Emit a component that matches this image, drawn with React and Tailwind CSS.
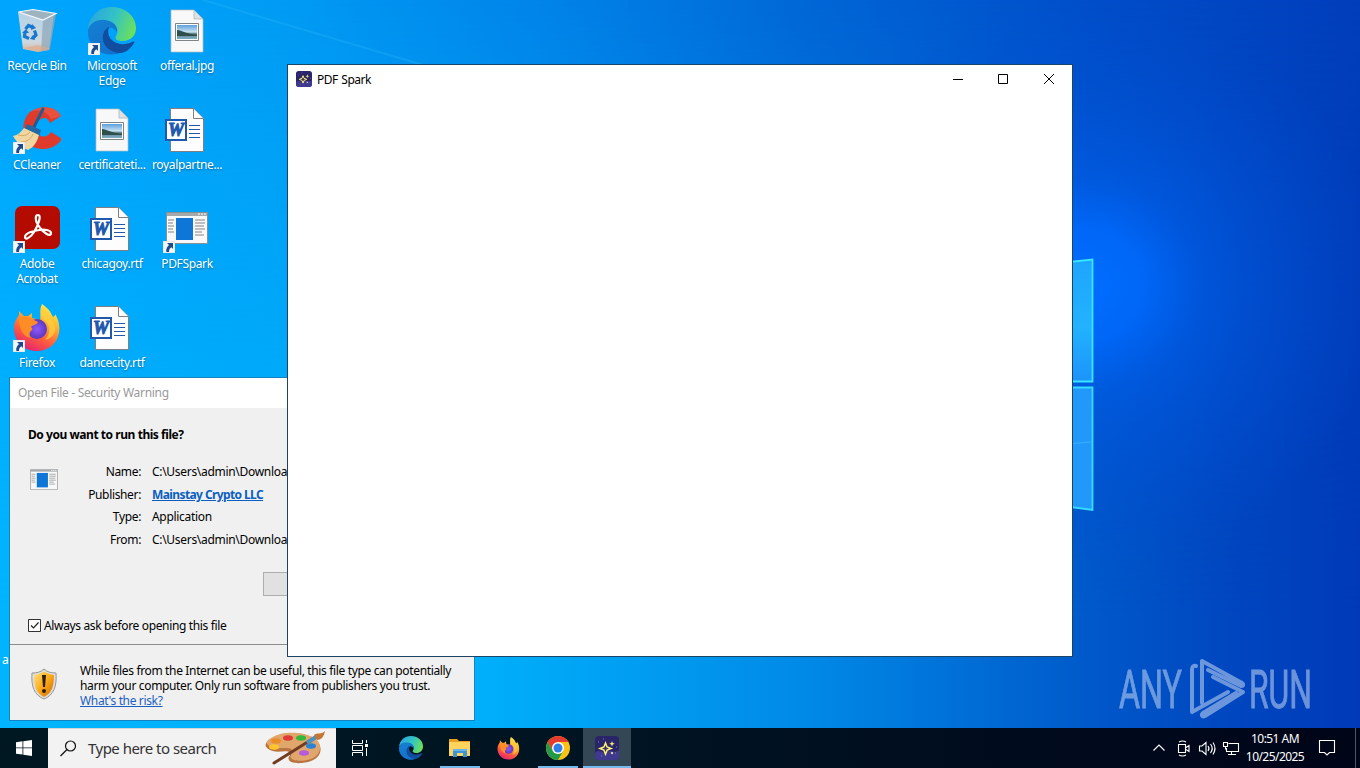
import React from "react";

function ShortcutArrow() {
  return (
    <svg viewBox="0 0 12 12" className="absolute bottom-0 left-0 w-3 h-3">
      <rect width="12" height="12" fill="#f4f6f8" stroke="#c8ccd2" strokeWidth="0.6" />
      <path d="M4 2h6v6L8.300 6.300C6.500 7.600 6 8.900 6 11H3.300C2.800 8 4 5.700 6 4Z" fill="#1d4a8c" />
    </svg>
  );
}

function RecycleBin() {
  return (
    <svg viewBox="0 0 48 48" className="w-12 h-12">
      <defs>
        <linearGradient id="bin" x1="0" y1="0" x2="0" y2="1">
          <stop offset="0" stopColor="#b4d2e6" />
          <stop offset="0.75" stopColor="#cdd8e0" />
          <stop offset="1" stopColor="#dfb59a" />
        </linearGradient>
      </defs>
      <path d="M5 5 41 7 36 43 25 45 10 42Z" fill="url(#bin)" />
      <path d="M30 13 43 7 37 42 28 45Z" fill="#8fa8b9" opacity="0.75" />
      <path d="M5.500 5 20 2.500 43 6.500 30 13Z" fill="#9db3c0" stroke="#f2f8fc" strokeWidth="1.200" />
      <path d="M10 41 28 44 37 41.500 25 38Z" fill="#e0a888" opacity="0.6" />
      <g fill="none" stroke="#1678cf" strokeWidth="3.200">
        <path d="M12.500 22 15.500 18.500 20 20.500" />
        <path d="M21.500 23.500 23 28 19.500 31.500" />
        <path d="M16 31.500 11.500 29.500 12 25" />
      </g>
      <path d="m19 17 4 4-5 2ZM22 33l-5-1 3-4ZM9 26l4-4 3 4Z" fill="#1678cf" />
    </svg>
  );
}

function EdgeIcon({ className }) {
  return (
    <svg viewBox="0 0 48 48" className={className}>
      <defs>
        <linearGradient id="edgeTop" x1="0" y1="0.300" x2="1" y2="0.600">
          <stop offset="0" stopColor="#2aa5e0" />
          <stop offset="0.5" stopColor="#33c3c6" />
          <stop offset="1" stopColor="#6ce05a" />
        </linearGradient>
        <linearGradient id="edgeMid" x1="0" y1="0" x2="0.600" y2="1">
          <stop offset="0" stopColor="#1380d2" />
          <stop offset="1" stopColor="#1472cc" />
        </linearGradient>
      </defs>
      <path d="M0 22C1 9 11 0 24 0s24 9 24 21c0 8-6 13-13 13-6 0-9-2-7-5 4-6 0-14-10-15C9 13 3 16 0 22Z" fill="url(#edgeTop)" />
      <path d="M0 23c2-7 9-11 17-10 8 1 13 6 12 12-2-3-5-5-8-4-6 7-1 21 14 23-5 4-11 4-17 3C6 44-1 34 0 23Z" fill="url(#edgeMid)" />
      <path d="M19 21c-8 7-5 24 14 25 6-1 10-5 13-10 1-1 0-2-2-1-6 3-14 3-19-1-4-3-6-8-4-14Z" fill="#114c9e" />
    </svg>
  );
}

function PictureFile() {
  return (
    <svg viewBox="0 0 48 48" className="w-12 h-12">
      <defs>
        <linearGradient id="photo" x1="0" y1="0" x2="0" y2="1">
          <stop offset="0" stopColor="#5e9fde" />
          <stop offset="0.500" stopColor="#c8e3f2" />
          <stop offset="0.620" stopColor="#5d8088" />
          <stop offset="1" stopColor="#7fb0c8" />
        </linearGradient>
      </defs>
      <path d="M8 3h23l9 9v33H8Z" fill="#f8f8f8" stroke="#b7bcc0" strokeWidth="0.700" />
      <path d="M31 3v9h9Z" fill="#dce2e5" stroke="#aab0b3" strokeWidth="0.700" />
      <path d="M12.500 16.500h23v17h-23Z" fill="#fff" stroke="#7d8387" />
      <path d="M14 18h20v14H14Z" fill="url(#photo)" />
      <path d="M14 23c5 0 9 4.500 20 4.500v1.500H14Z" fill="#2f4f4b" />
    </svg>
  );
}

function WordFile() {
  return (
    <svg viewBox="0 0 48 48" className="w-12 h-12">
      <path d="M7.500 2.500h23l10 10v33h-33Z" fill="#fdfdfd" stroke="#817d80" />
      <path d="M30.500 2.500v10h10" fill="#fff" stroke="#817d80" />
      <path d="M26 19.500h11M26 23.500h11M26 27.500h11M26 31.500h11" stroke="#2458a8" strokeWidth="1.200" />
      <rect x="3" y="14" width="20" height="20" fill="#fff" stroke="#1e59ae" strokeWidth="2" />
      <text x="13" y="30" textAnchor="middle" fontFamily="Liberation Serif, serif" fontSize="18" fontWeight="700" fontStyle="italic" letterSpacing="0" fill="#1e59ae" stroke="#1e59ae" strokeWidth="1">
        W
      </text>
    </svg>
  );
}

function CCleanerIcon() {
  return (
    <svg viewBox="0 0 48 48" className="w-12 h-12">
      <path d="M48 10C42-1 27-1 17 6 9 13 8 29 15 37c8 9 26 8 34-4l-11-7c-4 6-11 6-14 0-3-5-1-11 4-13 4-2 7-1 9 4Z" fill="#df3b2d" />
      <path d="M48 10C42-1 27-1 17 6c8-3 16-2 21 7Z" fill="#ef6048" opacity="0.6" />
      <path d="m30 3-9 18" stroke="#205c93" strokeWidth="3" strokeLinecap="round" />
      <path d="m14 18 14 6-2 7-15-7Z" fill="#2469a6" />
      <path d="m11 22 15 7c-2 7-5 12-11 15-6-2-11-7-15-14 5-1 8-4 11-8Z" fill="#f0d6a0" />
      <path d="M5 29c4 1 9 1 12-3M8 36c4 0 10-2 12-8" stroke="#d2aa69" fill="none" />
    </svg>
  );
}

function AcrobatIcon() {
  return (
    <svg viewBox="0 0 48 48" className="w-12 h-12">
      <rect x="2" y="1" width="45" height="43" rx="7" fill="#b30b00" />
      <path d="M12 32c0-4 8-6 14-7 5-1 12 0 12 3 0 5-9-1-13-8-3-5-3-10 0-10 4 0 0 11-4 17-3 5-9 9-9 5Z" fill="none" stroke="#fff" strokeWidth="2.200" />
    </svg>
  );
}

function FirefoxIcon({ className }) {
  return (
    <svg viewBox="0 0 48 48" className={className}>
      <defs>
        <linearGradient id="fox" x1="0.800" y1="0" x2="0.300" y2="1">
          <stop offset="0" stopColor="#fff14f" />
          <stop offset="0.350" stopColor="#ffb32f" />
          <stop offset="0.650" stopColor="#ff633a" />
          <stop offset="1" stopColor="#e52072" />
        </linearGradient>
        <radialGradient id="globe">
          <stop offset="0" stopColor="#9059ff" />
          <stop offset="1" stopColor="#5b38bd" />
        </radialGradient>
      </defs>
      <path d="M29 0c9 6 9 10 11 13 2-1 2-2 2-3 4 6 5 13 4 19-2 11-11 18-22 18C10 47 1 37 1 24c0-6 3-10 5-13V7l5 5h4l4-3v5l8 2c1-6-1-10 2-16Z" fill="url(#fox)" />
      <circle cx="24" cy="25" r="10" fill="url(#globe)" />
      <path d="M6 14c4-2 10-2 13 1l6 3c-1 3-6 3-7 5 1 1 2 2 1 3-3 2-3 5-1 8-7-1-12-8-12-20Z" fill="#ff8d26" />
      <path d="M30 15c8 4 8 15 2 21 9-2 13-10 8-18-3-5-8-8-11-13-2 5 0 8 1 10Z" fill="#ffcf3f" opacity="0.75" />
    </svg>
  );
}

// Generic Windows program icon
function AppIcon({ className }) {
  return (
    <svg viewBox="0 0 42 32" className={className}>
      <path d="M0.500 0.500h41v31h-41Z" fill="#f8f8f8" stroke="#8c8f91" />
      <path d="M1 1h40v3H1Z" fill="#a5a9ab" />
      <path d="M32 1.500h2v1h-2ZM35 1.500h2v1h-2ZM38 1.500h2v1h-2Z" fill="#fff" />
      <path d="M10 6h17v22H10Z" fill="#0d76d6" />
      <path d="M2 8h6M2 11h5M2 14h6M2 17h5M2 20h6M29 8h10M29 11h10M29 14h9M29 17h10M29 20h7M29 23h9" stroke="#858585" strokeWidth="1" />
    </svg>
  );
}

function SparkIcon({ className }) {
  return (
    <svg viewBox="0 0 24 24" className={className}>
      <rect width="24" height="24" rx="4" fill="#292568" />
      <path d="M0 17c5-5 6 1 10-2s7 4 14-1v6a4 4 0 0 1-4 4H4a4 4 0 0 1-4-4Z" fill="#4943a0" opacity="0.7" />
      <path d="M3 6h1M20 17h1M6 20h1M8 3h1M21 11h1" stroke="#807ccb" />
      <path d="m10.500 7 1.600 4 4 1.500-4 1.600-1.600 4.100-1.600-4.100-4-1.600 4-1.500Z" fill="#3b3660" stroke="#fff078" strokeWidth="1.500" />
      <path d="m17 5 .8 2 2 .8-2 .8-.8 2-.8-2-2-.8 2-.8Z" fill="#f5e77c" />
      <circle cx="17" cy="17" r="1.200" fill="#d8cf8a" />
    </svg>
  );
}

function ExplorerIcon() {
  return (
    <svg viewBox="0 0 24 24" className="w-6 h-6">
      <path d="M1 3h8l2 2h11v4H1Z" fill="#e8a021" />
      <path d="M1 6h21v14H1Z" fill="#ffd35c" />
      <path d="M5 13h14v8h-4v-4H9v4H5Z" fill="#3b95d8" />
      <path d="M5 13h14v2H5Z" fill="#67b4e9" />
    </svg>
  );
}

function ChromeIcon() {
  return (
    <svg viewBox="0 0 24 24" className="w-6 h-6">
      <circle cx="12" cy="12" r="12" fill="#fbc116" />
      <path d="M1.610 6A12 12 0 0 1 22.390 6H12L6.800 15Z" fill="#e33b2e" />
      <path d="M1.610 6A12 12 0 0 0 12 24L17.200 15 12 18 6.800 15Z" fill="#229a48" />
      <circle cx="12" cy="12" r="6" fill="#fff" />
      <circle cx="12" cy="12" r="4.500" fill="#307ee8" />
    </svg>
  );
}

function ShieldIcon() {
  return (
    <svg viewBox="0 0 28 32" className="w-7 h-8">
      <defs>
        <linearGradient id="shield" x1="0" y1="0" x2="1" y2="1">
          <stop offset="0" stopColor="#ffe486" />
          <stop offset="0.450" stopColor="#ffb01c" />
          <stop offset="1" stopColor="#ce6900" />
        </linearGradient>
      </defs>
      <path d="M14 1c3 3 7 4 12 4 1 13-2 22-12 26C4 27 1 18 2 5c5 0 9-1 12-4Z" fill="#dedede" stroke="#969696" />
      <path d="M14 3.500c3 2 6 3 10 3.500 0 11-2 18-10 22C6 25 4 18 4 7c4-.5 7-1.500 10-3.500Z" fill="url(#shield)" />
      <path d="M12 7h4l-1 12h-2Z" fill="#2b1c0b" />
      <circle cx="14" cy="23" r="2" fill="#2b1c0b" />
    </svg>
  );
}

function PaletteIcon() {
  return (
    <svg viewBox="0 0 64 36" className="w-16 h-9">
      <path d="M9 7c9-7 32-7 43 2 8 7 5 18-5 21-8 3-20 3-22-1-2-3 2-4 1-7-3-4-13 1-20-3C-2 15 2 10 9 7Z" fill="#b9743f" />
      <path d="M9 6c9-6 32-6 43 2 7 6 5 16-5 20-8 3-18 2-20-1-2-3 3-4 1-8-3-4-15 0-21-3C-1 12 3 9 9 6Z" fill="#e0a66c" />
      <ellipse cx="12" cy="10" rx="5" ry="2.800" fill="#ed8b25" />
      <ellipse cx="24" cy="7" rx="5" ry="2.800" fill="#df3a36" />
      <ellipse cx="37" cy="7" rx="5" ry="2.800" fill="#35b63d" />
      <ellipse cx="10" cy="16" rx="5" ry="2.800" fill="#ffc52d" />
      <ellipse cx="47" cy="15" rx="5" ry="2.800" fill="#2783d5" />
      <ellipse cx="40" cy="22" rx="5" ry="2.800" fill="#b65be0" />
      <path d="m10 32 40-25" stroke="#713c22" strokeWidth="3" strokeLinecap="round" />
      <path d="m43 12 9-6" stroke="#4f91bd" strokeWidth="4" />
      <path d="M50 4c3-3 7 0 11-4-1 6-4 9-8 9Z" fill="#c47735" />
    </svg>
  );
}

const desktopIcons = [
  { name: "Recycle Bin", icon: <RecycleBin /> },
  { name: "Microsoft Edge", icon: <EdgeIcon className="w-12 h-12" />, shortcut: true },
  { name: "offeral.jpg", icon: <PictureFile /> },
  { name: "CCleaner", icon: <CCleanerIcon />, shortcut: true },
  { name: "certificateti...", icon: <PictureFile /> },
  { name: "royalpartne...", icon: <WordFile /> },
  { name: "Adobe Acrobat", icon: <AcrobatIcon />, shortcut: true },
  { name: "chicagoy.rtf", icon: <WordFile /> },
  { name: "PDFSpark", icon: <AppIcon className="w-[42px] h-8 mt-[7px]" />, shortcut: true },
  { name: "Firefox", icon: <FirefoxIcon className="w-12 h-12" />, shortcut: true },
  { name: "dancecity.rtf", icon: <WordFile /> },
];

function DesktopIcon({ item }) {
  return (
    <div className="flex flex-col items-center h-[99px] pt-[7px]">
      <div className="relative w-12 h-12 flex justify-center">
        {item.icon}
        {item.shortcut && <ShortcutArrow />}
      </div>
      <p className="w-[72px] mt-[3px] ml-px text-center leading-[15px] text-white [text-shadow:0_1px_2px_rgb(0_0_0/0.4)]">
        {item.name}
      </p>
    </div>
  );
}

function Wallpaper() {
  return (
    <svg viewBox="0 0 1360 768" className="absolute inset-0 w-[1360px] h-[768px]">
      <defs>
        <linearGradient id="sky">
          <stop offset="0" stopColor="#00a6fd" />
          <stop offset="0.200" stopColor="#009cf4" />
          <stop offset="0.400" stopColor="#0084e9" />
          <stop offset="0.600" stopColor="#0066d6" />
          <stop offset="0.800" stopColor="#004eca" />
          <stop offset="1" stopColor="#003ebb" />
        </linearGradient>
        <linearGradient id="floor">
          <stop offset="0" stopColor="#00b4ff" />
          <stop offset="0.350" stopColor="#00b0fc" />
          <stop offset="0.600" stopColor="#0088e6" />
          <stop offset="0.800" stopColor="#0059ca" />
          <stop offset="0.900" stopColor="#0047c0" />
          <stop offset="1" stopColor="#003ab8" />
        </linearGradient>
        <linearGradient id="fade" x1="0" y1="0" x2="0" y2="1">
          <stop offset="0" stopColor="#000" />
          <stop offset="0.800" stopColor="#fff" />
        </linearGradient>
        <mask id="lower">
          <rect width="1360" height="768" fill="url(#fade)" />
        </mask>
        <radialGradient id="glow">
          <stop offset="0" stopColor="#006eff" />
          <stop offset="0.200" stopColor="#0069fc" stopOpacity="0.900" />
          <stop offset="0.400" stopColor="#005eea" stopOpacity="0.550" />
          <stop offset="0.700" stopColor="#0053d8" stopOpacity="0.350" />
          <stop offset="1" stopColor="#004cd0" stopOpacity="0" />
        </radialGradient>
        <linearGradient id="pane" x1="0" y1="0" x2="0" y2="1">
          <stop offset="0" stopColor="#1fa5ff" />
          <stop offset="0.550" stopColor="#22b2ff" />
          <stop offset="1" stopColor="#1c93fa" />
        </linearGradient>
      </defs>
      <rect width="1360" height="768" fill="url(#sky)" />
      <rect width="1360" height="768" fill="url(#floor)" mask="url(#lower)" />
      <path d="m203 0 220 65" stroke="#2bb8ff" strokeWidth="2" opacity="0.300" />
      <ellipse cx="1085" cy="285" rx="300" ry="280" fill="url(#glow)" />
      <path d="M1040 265 1092.500 259.500V381.500H1040Z" fill="url(#pane)" stroke="#38e6ff" strokeWidth="1.800" />
      <path d="M1040 387.500h52.500V510L1040 503Z" fill="#2299fa" stroke="#35dcff" strokeWidth="1.800" />
      <path d="m1040 446 52-4" stroke="#42c2ff" opacity="0.600" />
    </svg>
  );
}

function Watermark() {
  return (
    <svg viewBox="0 0 242 64" className="absolute left-[1118px] top-[657px] w-[242px] h-16 opacity-60">
      <g fontFamily="Roboto, sans-serif" fontSize="53" letterSpacing="0" fill="#b5cbef" stroke="#b5cbef" strokeWidth="0.900">
        <text x="1" y="51" textLength="63" lengthAdjust="spacingAndGlyphs">ANY</text>
        <text x="131" y="51" textLength="63" lengthAdjust="spacingAndGlyphs">RUN</text>
      </g>
      <g fill="none" stroke="#b5cbef" strokeWidth="4" strokeLinejoin="round" strokeLinecap="round">
        <path d="M78 9c-3-1-4 1-4 4v42l36-20" />
        <path d="M84 46V4l40 22c2 1.500 1 3.500-1 3L90 13" />
        <path d="m95 20 30 15-38 24c-3 1.500-4-1-2-3l33-20" />
      </g>
    </svg>
  );
}

function SecurityDialog() {
  const details = [
    ["Name:", "C:\\Users\\admin\\Downloa"],
    ["Publisher:", "Mainstay Crypto LLC"],
    ["Type:", "Application"],
    ["From:", "C:\\Users\\admin\\Downloa"],
  ];
  return (
    <section className="absolute left-[9px] top-[377px] w-[466px] h-[344px] border border-[#1583bd] bg-[#f0f0f0] text-black flex flex-col">
      <div className="h-[30px] shrink-0 bg-white pl-2 leading-[30px] text-[#999] tracking-[-0.31px]">
        Open File - Security Warning
      </div>
      <div className="h-[237px] shrink-0 border-b border-[#8d8d8d] pl-[18px] pt-[19px]">
        <p className="font-bold leading-4 tracking-[-0.45px]">Do you want to run this file?</p>
        <div className="flex mt-[18px]">
          <AppIcon className="w-7 h-[21px] mt-[8px] ml-[2px] shrink-0" />
          <div className="ml-[54px]">
            {details.map(([label, value]) => (
              <div key={label} className="flex h-[22.600px] items-center">
                <span className="w-[29px] flex justify-end whitespace-nowrap">{label}</span>
                {label === "Publisher:" ? (
                  <a className="ml-[11px] font-bold text-[#0b5fc0] underline tracking-[-0.6px]">{value}</a>
                ) : (
                  <span className="ml-[11px] tracking-[-0.3px]">{value}</span>
                )}
              </div>
            ))}
          </div>
        </div>
        <div className="ml-[235px] mt-[20.400px] w-[80px] h-6 border border-[#adadad] bg-[#e1e1e1]" />
        <div className="flex items-center mt-[22px] gap-[3px]">
          <svg viewBox="0 0 13 13" className="w-[13px] h-[13px]">
            <path d="M0.500 0.500h12v12h-12Z" fill="#fff" stroke="#333" />
            <path d="m3 6.500 2.500 2.500L10.500 3.500" fill="none" stroke="#222" strokeWidth="1.200" />
          </svg>
          <span className="leading-4">Always ask before opening this file</span>
        </div>
      </div>
      <div className="flex pl-5 pt-[18px]">
        <div className="pt-[5px]">
          <ShieldIcon />
        </div>
        <div className="ml-[22px] leading-[15px] whitespace-nowrap">
          <p>While files from the Internet can be useful, this file type can potentially</p>
          <p>harm your computer. Only run software from publishers you trust.</p>
          <a className="text-[#1a5fc0] underline">What's the risk?</a>
        </div>
      </div>
    </section>
  );
}

function PdfSparkWindow() {
  return (
    <section className="absolute left-[287px] top-[64px] w-[786px] h-[593px] border border-[#1c4463] bg-white">
      <div className="flex items-center h-[29px] pl-2">
        <SparkIcon className="w-4 h-4 mb-px" />
        <span className="ml-[5px] text-black tracking-[-0.5px] [word-spacing:1px]">PDF Spark</span>
        <svg viewBox="0 0 138 29" className="ml-auto w-[138px] h-[29px]" fill="none" stroke="#000">
          <path d="M19 14.500h10M64.500 9.500h9v9h-9Z" />
          <path d="m110 9 10 10M120 9l-10 10" />
        </svg>
      </div>
    </section>
  );
}

function Taskbar() {
  return (
    <footer className="absolute left-0 top-[728px] w-[1360px] h-10 flex bg-linear-to-r from-[#001822] via-[#001322] to-[#000518]">
      <div className="w-12 flex items-center justify-center">
        <svg viewBox="0 0 16 16" className="w-4 h-4" fill="#fff">
          <path d="M0 2.200 6.500 1.300V7.500H0ZM7.300 1.200 16 0V7.500H7.300ZM0 8.300H6.500V14.600L0 13.700ZM7.300 8.300H16V16L7.300 14.700Z" />
        </svg>
      </div>
      <div className="w-72 flex items-center bg-[#f2f2f2] border-t border-[#d4d4d4] pl-3">
        <svg viewBox="0 0 17 17" className="w-[17px] h-[17px]" fill="none" stroke="#111" strokeWidth="1.200">
          <circle cx="10.500" cy="6" r="5" />
          <path d="m7 9.500-6.500 6.500" />
        </svg>
        <span className="ml-[11px] mb-[2px] text-[15px] text-[#333] whitespace-nowrap tracking-[-0.52px]">Type here to search</span>
        <div className="ml-auto mr-[8px]">
          <PaletteIcon />
        </div>
      </div>
      <div className="w-[50px] flex items-center justify-center pr-[2px]">
        <svg viewBox="0 0 18 16" className="w-[18px] h-4" fill="none" stroke="#fff">
          <path d="M1.500 0v3.500h10V0M1.500 16v-3.500h10V16M1.500 5.500h10v5h-10ZM15.500 0v3M15.500 8v8" />
          <path d="M14 4h3v3h-3Z" fill="#fff" stroke="none" />
        </svg>
      </div>
      <div className="w-[49px] flex items-center justify-center">
        <EdgeIcon className="w-6 h-6" />
      </div>
      <div className="w-[49px] flex flex-col items-center pt-2">
        <ExplorerIcon />
        <div className="mt-auto w-10 h-[2px] bg-[#76b9ed]" />
      </div>
      <div className="w-[49px] flex items-center justify-center">
        <FirefoxIcon className="w-[23px] h-[23px]" />
      </div>
      <div className="w-[49px] flex flex-col items-center pt-2">
        <ChromeIcon />
        <div className="mt-auto w-10 h-[2px] bg-[#76b9ed]" />
      </div>
      <div className="w-12 ml-px flex flex-col items-center pt-2 bg-[#334754]">
        <SparkIcon className="w-6 h-6" />
        <div className="mt-auto w-12 h-[2px] bg-[#76b9ed]" />
      </div>

      <div className="ml-auto flex items-center text-white">
        <svg viewBox="0 0 90 20" className="w-[90px] h-5" fill="none" stroke="#fff" strokeWidth="1.100">
          <path d="m1.500 12.500 5.500-5.500 5.500 5.500" />
          <path d="M26.500 6.500h7v8h-7ZM34 9.500l3-2v6l-3-2M27 4q3.500-2 7 0M27 17q3.500 2 7 0" />
          <path d="M47.500 8h2.500l4-3.500v12L50 13h-2.500ZM56 8q2 2.500 0 5M58.500 6q3.500 4.500 0 9M61 4.500q4 6 0 12" />
          <path d="M76.500 5.500h10v8H74.500V10M79.500 13.500v3M76 16.500h8M71.500 4.500h4v4h-4ZM73.500 8.500v3" />
        </svg>
        <div className="ml-px w-[64px] text-center leading-[18px] whitespace-nowrap tracking-[-0.55px]">
          <p>10:51 AM</p>
          <p>10/25/2025</p>
        </div>
        <svg viewBox="0 0 18 18" className="ml-[11px] w-[18px] h-[18px]" fill="none" stroke="#fff" strokeWidth="1.100">
          <path d="M1.500 1.500h15v12h-5L9 16l-2.500-2.500h-5Z" />
        </svg>
        <div className="ml-[19px] mr-1 w-px h-10 bg-[#4c5666]" />
      </div>
    </footer>
  );
}

export default function App() {
  return (
    <main className="relative w-[1360px] h-[768px] overflow-hidden font-['Noto_Sans','Open_Sans',sans-serif] text-xs tracking-[-0.35px] select-none">
      <Wallpaper />
      <div className="relative grid grid-cols-3 w-[225px] -ml-px">
        {desktopIcons.map((item) => (
          <DesktopIcon key={item.name} item={item} />
        ))}
      </div>
      <p className="relative mt-[256px] pl-[2px] w-4 leading-[15px] text-white">a</p>
      <Watermark />
      <SecurityDialog />
      <PdfSparkWindow />
      <Taskbar />
    </main>
  );
}
